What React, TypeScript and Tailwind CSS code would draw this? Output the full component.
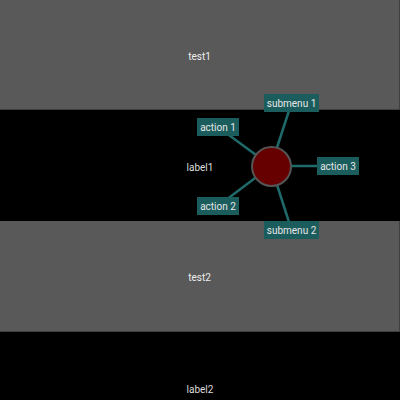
import React from 'react';

type Item = { label: string; x: number; y: number; w: number };

// positions of the menu entries, measured from the page's top-left corner
const CENTER = { x: 271, y: 166 };
const items: Item[] = [
    { label: 'submenu 1', x: 264, y: 94, w: 55 },
    { label: 'action 1', x: 197, y: 118, w: 42 },
    { label: 'action 3', x: 317, y: 157, w: 42 },
    { label: 'action 2', x: 197, y: 197, w: 42 },
    { label: 'submenu 2', x: 264, y: 221, w: 55 },
];
const H = 18;

const Band: React.FC<{ dark?: boolean; text: string; h: string }> = ({ dark, text, h }) => (
    <div
        className={
            dark
                ? `${h} bg-black pt-[3px] flex items-center justify-center text-[10px] text-[#dddddd]`
                : `${h} bg-[#595959] pt-[3px] border-b border-r border-[#3f3f3f] flex items-center justify-center text-[10px] text-[#eeeeee]`
        }
    >
        {text}
    </div>
);

const RadialMenu = () => (
    <div className="absolute inset-0 pointer-events-none">
        <svg className="absolute inset-0" width={400} height={400}>
            {items.map((it) => (
                <line
                    key={it.label}
                    x1={CENTER.x}
                    y1={CENTER.y}
                    x2={it.x + it.w / 2}
                    y2={it.y + H / 2}
                    stroke="#1f6a6a"
                    strokeWidth={2.5}
                />
            ))}
        </svg>
        <div
            className="absolute w-[41px] h-[41px] rounded-full bg-[#660000] border-[2.5px] border-[#555555]"
            style={{ left: CENTER.x - 20.5, top: CENTER.y - 20.5 }}
        />
        {items.map((it) => (
            <div
                key={it.label}
                className="absolute h-[18px] pt-px bg-[#1b5d5d] text-[#e6e6e6] text-[10px] flex items-center justify-center"
                style={{ left: it.x, top: it.y, width: it.w }}
            >
                {it.label}
            </div>
        ))}
    </div>
);

export default function App() {
    return (
        <div className="relative w-[400px] h-[400px] overflow-hidden bg-black font-['Roboto',sans-serif]">
            <Band text="test1" h="h-[110px]" />
            <Band dark text="label1" h="h-[111px]" />
            <Band text="test2" h="h-[111px]" />
            <Band dark text="label2" h="h-[112px]" />
            <RadialMenu />
        </div>
    );
}
